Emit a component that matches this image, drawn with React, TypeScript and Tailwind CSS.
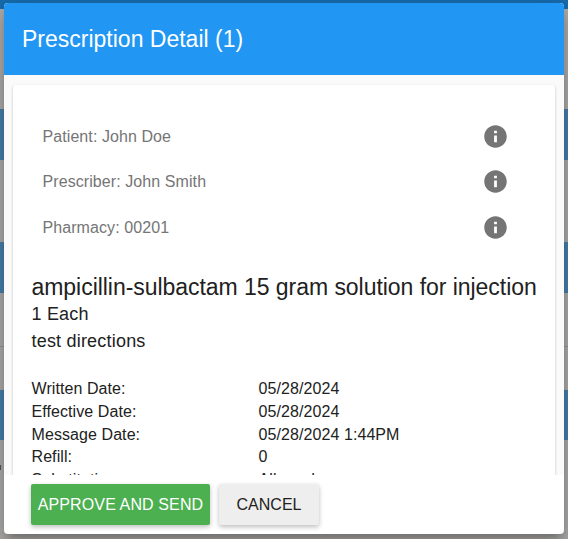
import React from "react";

const contacts = [
  { label: "Patient", value: "John Doe" },
  { label: "Prescriber", value: "John Smith" },
  { label: "Pharmacy", value: "00201" },
];

const details = [
  { label: "Written Date:", value: "05/28/2024" },
  { label: "Effective Date:", value: "05/28/2024" },
  { label: "Message Date:", value: "05/28/2024 1:44PM" },
  { label: "Refill:", value: "0" },
  { label: "Substitution:", value: "Allowed" },
];

const InfoIcon: React.FC = () => (
  <svg viewBox="0 0 24 24" className="mb-px size-[27px] fill-[#757575]">
    <path d="M12 2C6.48 2 2 6.48 2 12s4.48 10 10 10 10-4.48 10-10S17.52 2 12 2zm1.25 15h-2.5v-6h2.5v6zm0-8h-2.5V6.8h2.5V9z" />
  </svg>
);

// The dimmed page that sits behind the dialog
const Backdrop: React.FC = () => (
  <div className="flex h-full flex-col bg-[#b0aeac]">
    <div className="h-[9px] bg-[#186caf]" />
    <div className="h-[100px]" />
    <div className="h-[51px] bg-[#4781af]" />
    <div className="h-[82px]" />
    <div className="h-[51px] bg-[#4781af]" />
    <div className="h-[54px] border-b border-[#989898]" />
    <div className="h-[43px]" />
    <div className="h-[50px] bg-[#4781af]" />
    <div className="mt-[25px] h-[5px] w-px bg-[#555]" />
  </div>
);

const App: React.FC = () => {
  return (
    <div className="relative h-[539px] w-[568px] overflow-hidden font-['Liberation_Sans',Arial,sans-serif] text-[#212121]">
      <Backdrop />

      <div className="absolute inset-x-[4px] top-[3px] flex h-[531px] flex-col overflow-hidden rounded-[4px] bg-white shadow-[0_7px_8px_-4px_rgba(0,0,0,0.2),0_13px_19px_2px_rgba(0,0,0,0.14),0_5px_24px_4px_rgba(0,0,0,0.12)]">
        <header className="flex h-[72px] shrink-0 items-center bg-[#2196f3] pl-[18px]">
          <h1 className="text-[23px] text-white">Prescription Detail (1)</h1>
        </header>

        <main className="h-[400px] shrink-0 overflow-hidden bg-[#fafafa] px-[9px] pt-[10px]">
          <div className="h-[460px] rounded-[2px] bg-white pt-[29px] shadow-[0_1px_3px_0_rgba(0,0,0,0.2),0_1px_1px_0_rgba(0,0,0,0.14),0_2px_1px_-1px_rgba(0,0,0,0.12)]">
            <div className="pl-[29.5px] pr-[46px] text-[16px] tracking-[0.08px] text-[#757575]">
              {contacts.map(({ label, value }) => (
                <div key={label} className="flex h-[45.5px] items-center justify-between">
                  <span>
                    {label}: {value}
                  </span>
                  <InfoIcon />
                </div>
              ))}
            </div>

            <div className="pl-[18.5px] pt-[19px]">
              <h2 className="text-[23px] leading-[34px] tracking-[-0.045px] whitespace-nowrap">
                ampicillin-sulbactam 15 gram solution for injection
              </h2>
              <p className="-mt-[3px] text-[18px] leading-[27px] tracking-[0.2px]">1 Each</p>
              <p className="text-[18px] leading-[27px] tracking-[0.2px]">test directions</p>

              <dl className="mt-[23.5px] text-[16px] leading-[22.75px] tracking-[0.08px]">
                {details.map(({ label, value }) => (
                  <div key={label} className="flex">
                    <dt className="w-[227px]">{label}</dt>
                    <dd>{value}</dd>
                  </div>
                ))}
              </dl>
            </div>
          </div>
        </main>

        <footer className="flex gap-[9px] pl-[27px] pt-[9px] text-[16px]">
          <button className="h-[41px] w-[179px] rounded-[2px] bg-[#4caf50] tracking-[0.12px] whitespace-nowrap text-white shadow-[0_2px_5px_0_rgba(0,0,0,0.26)]">
            APPROVE AND SEND
          </button>
          <button className="h-[41px] w-[100px] rounded-[2px] bg-[#eeeeee] shadow-[0_2px_5px_0_rgba(0,0,0,0.26)]">
            CANCEL
          </button>
        </footer>
      </div>
    </div>
  );
};

export default App;
